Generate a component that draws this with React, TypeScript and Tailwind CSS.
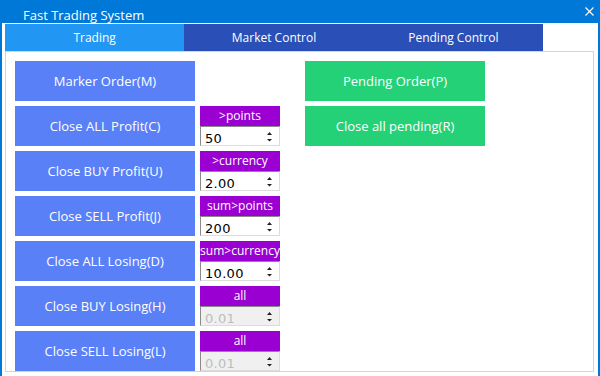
import React from "react";

type Row = { label: string; tag?: string; value?: string; disabled?: boolean };

const rows: Row[] = [
  { label: "Marker Order(M)" },
  { label: "Close ALL Profit(C)", tag: ">points", value: "50" },
  { label: "Close BUY Profit(U)", tag: ">currency", value: "2.00" },
  { label: "Close SELL Profit(J)", tag: "sum>points", value: "200" },
  { label: "Close ALL Losing(D)", tag: "sum>currency", value: "10.00" },
  { label: "Close BUY Losing(H)", tag: "all", value: "0.01", disabled: true },
  { label: "Close SELL Losing(L)", tag: "all", value: "0.01", disabled: true },
];

const tabs = ["Trading", "Market Control", "Pending Control"];

function Spinner() {
  return (
    <svg width="7" height="14" viewBox="0 0 7 14">
      <path d="M3.5 3 L6 6 L1 6 Z" fill="#222" />
      <path d="M1 10 L6 10 L3.5 12.5 Z" fill="#222" />
    </svg>
  );
}

function ValueBox({ tag, value, disabled }: { tag: string; value: string; disabled?: boolean }) {
  return (
    <div className="flex flex-col w-[80px] h-[40px]">
      <div className="h-[20px] bg-[#9b00d2] text-white text-[12px] leading-[20px] text-center">{tag}</div>
      <div
        className={`relative h-[20px] pl-[4px] pt-[5px] border-l border-t border-[#8a8a8a] border-r-[#dcdcdc] border-b-[#dcdcdc] border-r border-b ${
          disabled ? "bg-[#f0f0f0] text-[#bdbdbd]" : "bg-white text-black"
        }`}
      >
        <div className="text-[13px] leading-[13px] font-['DejaVu_Sans',sans-serif] tracking-[0.3px]">{value}</div>
        <div className="absolute right-[6px] top-[2px]">
          <Spinner />
        </div>
      </div>
    </div>
  );
}

export default function App() {
  return (
    <div className="w-[600px] h-[376px] bg-[#0078d7] flex flex-col overflow-hidden font-['Open_Sans',sans-serif]">
      <div className="h-[23px] shrink-0 flex items-start justify-between pl-[23px] pr-[6px] text-white text-[13px]">
        <span className="leading-[16px] mt-[7px]">Fast Trading System</span>
        <svg width="9" height="9" viewBox="0 0 9 9" className="mt-[7px]">
          <path d="M0.5 0.5 L8.5 8.5 M8.5 0.5 L0.5 8.5" stroke="white" strokeWidth="1.1" />
        </svg>
      </div>
      <div className="flex-1 ml-[2px] mr-[2px] bg-white pt-[1px] pl-[3px] pr-[4px]">
        <div className="flex h-[27px] w-[538px]">
          {tabs.map((t, i) => (
            <div
              key={t}
              className={`flex-1 flex items-center justify-center pt-[1px] text-white text-[12px] ${
                i === 0 ? "bg-[#2196f3]" : "bg-[#2a4fb6]"
              }`}
            >
              {t}
            </div>
          ))}
        </div>
        <div className="h-[321px] border border-[#d4d4d4] pt-[9px] pl-[9px] flex">
          <div className="flex flex-col gap-[5px]">
            {rows.map((r) => (
              <div key={r.label} className="flex gap-[5px]">
                <button className="w-[180px] h-[40px] pt-[1px] bg-[#5a80f8] text-white text-[13px]">{r.label}</button>
                {r.tag && <ValueBox tag={r.tag} value={r.value!} disabled={r.disabled} />}
              </div>
            ))}
          </div>
          <div className="flex flex-col gap-[5px] ml-[25px]">
            <button className="w-[180px] h-[40px] pt-[1px] bg-[#24d177] text-white text-[13px]">Pending Order(P)</button>
            <button className="w-[180px] h-[40px] pt-[1px] bg-[#24d177] text-white text-[13px]">Close all pending(R)</button>
          </div>
        </div>
      </div>
    </div>
  );
}
